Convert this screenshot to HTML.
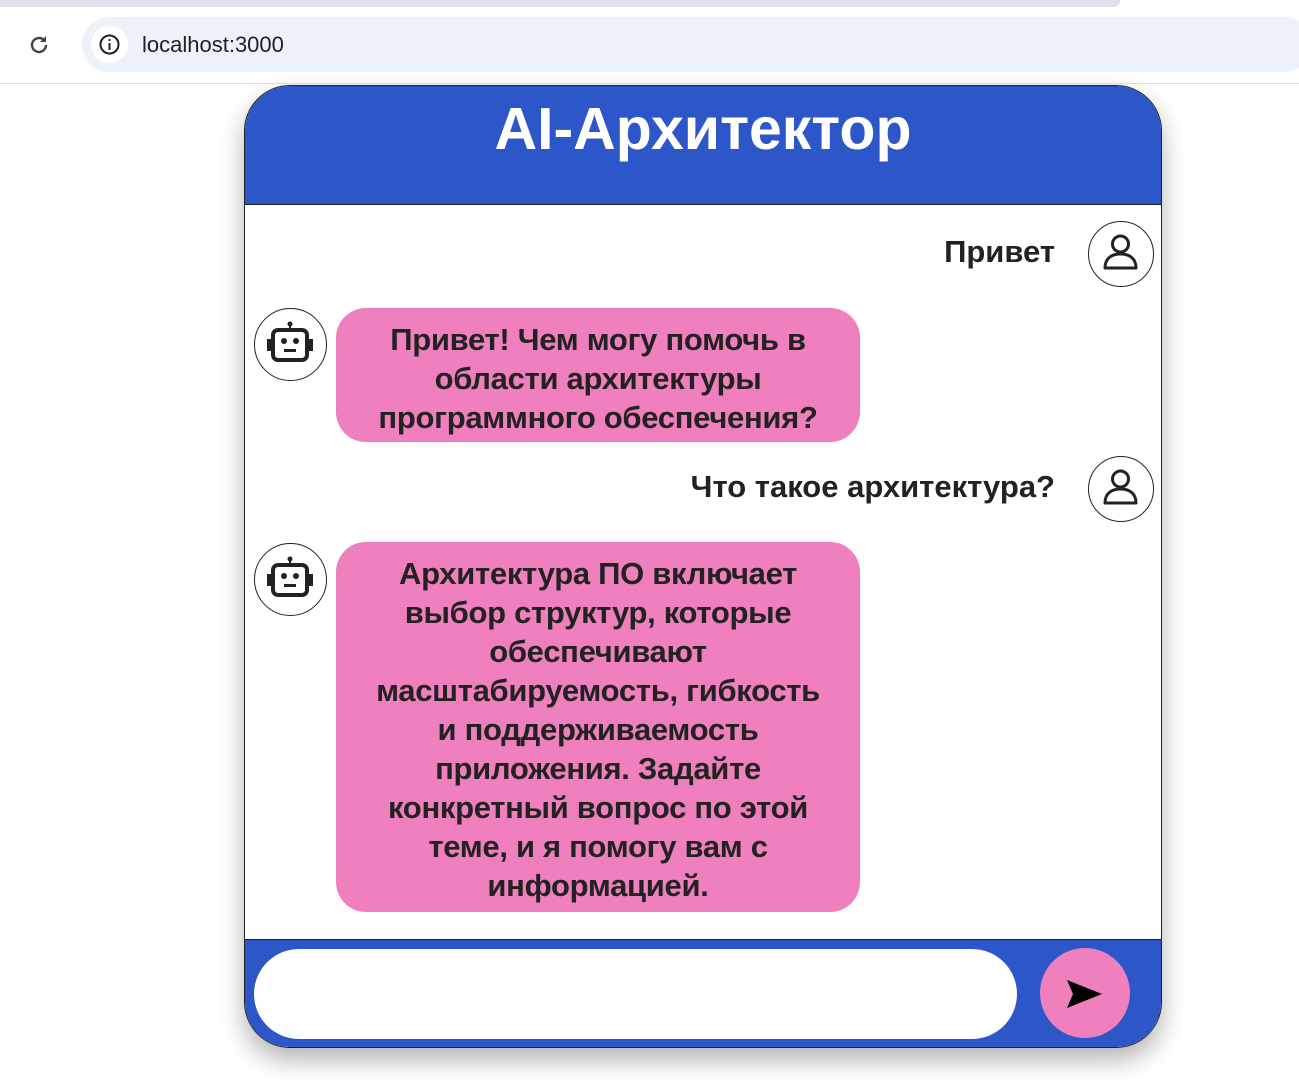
<!DOCTYPE html>
<html><head><meta charset="utf-8"><style>
body{margin:0;width:1299px;height:1085px;background:#fff;font-family:"Liberation Sans","DejaVu Sans",sans-serif;position:relative;overflow:hidden}
.tabbar{position:absolute;left:0;top:0;width:1120px;height:7px;background:#dee1e6;border-radius:0 0 6px 0}
.bar{position:absolute;left:0;top:7px;width:1299px;height:76px;background:#fff;border-bottom:1px solid #e0e0e0}
.url{position:absolute;left:82px;top:17px;width:1230px;height:55px;border-radius:28px;background:#edf2fa}
.url .ic{position:absolute;left:9px;top:9px;width:37px;height:37px;border-radius:50%;background:#fff}
.url span{position:absolute;left:60px;top:15px;font-size:22px;color:#1f1f1f}
.chat{position:absolute;left:244px;top:85px;width:916px;height:961px;border:1px solid #222;border-radius:46px;overflow:hidden;box-shadow:0 12px 25px rgba(0,0,0,.3);background:#fff}
.head{height:118px;background:#2d56c8;border-bottom:1px solid #222;color:#fff;font-weight:bold;font-size:59px;text-align:center;line-height:86px}
.foot{position:absolute;left:0;top:853px;width:916px;height:108px;background:#2d56c8;border-top:1px solid #222}
.inp{position:absolute;left:9px;top:9px;width:763px;height:90px;border-radius:45px;background:#fff}
.send{position:absolute;left:795px;top:8px;width:90px;height:90px;border-radius:50%;background:#ef7fbd}
.av{position:absolute;border:1.5px solid #222;border-radius:50%;background:#fff;box-sizing:border-box}
.bub{position:absolute;left:91px;width:524px;background:#ef7fbd;border-radius:30px;color:#222;font-weight:bold;font-size:31px;line-height:39px;text-align:center;box-sizing:border-box;padding:12px 0;white-space:nowrap;letter-spacing:-0.3px}
.um{position:absolute;right:106px;font-size:31px;font-weight:bold;color:#222}
</style></head><body>
<div class="tabbar"></div>
<div class="bar">
<svg style="position:absolute;left:27px;top:26px" width="24" height="24" viewBox="0 0 24 24"><path d="M19 12a7 7 0 1 1-2.1-5" fill="none" stroke="#444" stroke-width="2.4"/><path d="M19 3v6h-6z" fill="#444"/></svg>
</div>
<div class="url"><div class="ic"><svg width="37" height="37" viewBox="0 0 37 37"><circle cx="18.5" cy="18.5" r="9" fill="none" stroke="#222" stroke-width="2"/><rect x="17.5" y="17" width="2" height="7" fill="#222"/><rect x="17.5" y="13" width="2" height="2" fill="#222"/></svg></div><span>localhost:3000</span></div>
<div class="chat">
<div class="head">AI-Архитектор</div>
<div class="um" style="top:148px">Привет</div>
<div class="av" style="left:843px;top:135px;width:66px;height:66px"><svg width="63" height="63" viewBox="0 0 63 63"><circle cx="31.5" cy="22" r="8" fill="none" stroke="#222" stroke-width="3"/><path d="M16 46c0-10 7-14 15.5-14S47 36 47 46z" fill="none" stroke="#222" stroke-width="3" stroke-linejoin="round"/></svg></div>
<div class="av" style="left:9px;top:222px;width:73px;height:73px"><svg width="70" height="70" viewBox="0 0 70 70"><circle cx="35" cy="15" r="2.5" fill="#222"/><rect x="34" y="15" width="2" height="6" fill="#222"/><rect x="18" y="21" width="34" height="30" rx="5" fill="none" stroke="#222" stroke-width="4"/><rect x="12" y="30" width="4" height="12" fill="#222"/><rect x="54" y="30" width="4" height="12" fill="#222"/><circle cx="29" cy="32" r="3" fill="#222"/><circle cx="41" cy="32" r="3" fill="#222"/><rect x="29" y="40" width="12" height="3" fill="#222"/></svg></div>
<div class="bub" style="top:222px;height:134px">Привет! Чем могу помочь в<br>области архитектуры<br>программного обеспечения?</div>
<div class="um" style="top:383px">Что такое архитектура?</div>
<div class="av" style="left:843px;top:370px;width:66px;height:66px"><svg width="63" height="63" viewBox="0 0 63 63"><circle cx="31.5" cy="22" r="8" fill="none" stroke="#222" stroke-width="3"/><path d="M16 46c0-10 7-14 15.5-14S47 36 47 46z" fill="none" stroke="#222" stroke-width="3" stroke-linejoin="round"/></svg></div>
<div class="av" style="left:9px;top:457px;width:73px;height:73px"><svg width="70" height="70" viewBox="0 0 70 70"><circle cx="35" cy="15" r="2.5" fill="#222"/><rect x="34" y="15" width="2" height="6" fill="#222"/><rect x="18" y="21" width="34" height="30" rx="5" fill="none" stroke="#222" stroke-width="4"/><rect x="12" y="30" width="4" height="12" fill="#222"/><rect x="54" y="30" width="4" height="12" fill="#222"/><circle cx="29" cy="32" r="3" fill="#222"/><circle cx="41" cy="32" r="3" fill="#222"/><rect x="29" y="40" width="12" height="3" fill="#222"/></svg></div>
<div class="bub" style="top:456px;height:370px">Архитектура ПО включает<br>выбор структур, которые<br>обеспечивают<br>масштабируемость, гибкость<br>и поддерживаемость<br>приложения. Задайте<br>конкретный вопрос по этой<br>теме, и я помогу вам с<br>информацией.</div>
<div class="foot"><div class="inp"></div><div class="send"><svg width="90" height="90" viewBox="0 0 90 90"><path d="M27 32L62 46 27 60 33 46z" fill="#000"/></svg></div></div>
</div>
</body></html>
